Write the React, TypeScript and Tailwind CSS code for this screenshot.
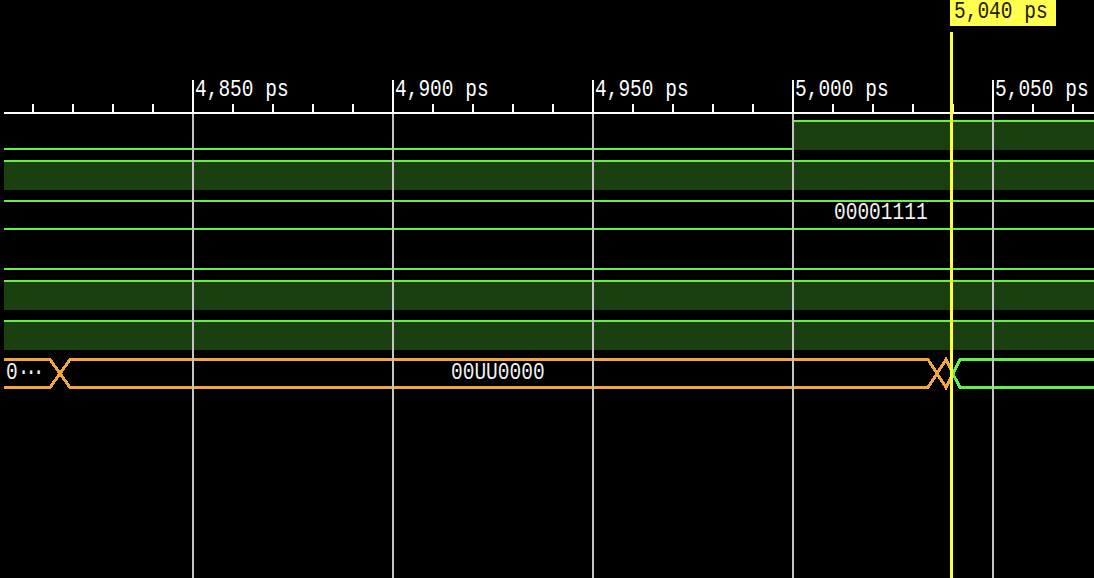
import React from 'react';

// waveform colours
const GREEN = '#66f046';
const FILL = '#1a400f';
const ORANGE = '#f2a73b';
const W = 1090; // drawable width (page is 1094, 4px left gutter)

const majors = [193, 393, 593, 793, 993];
const labels = ['4,850 ps', '4,900 ps', '4,950 ps', '5,000 ps', '5,050 ps'];

const Tall: React.FC<{ children: React.ReactNode }> = ({ children }) => (
  <span className="inline-block origin-top scale-y-[1.2] whitespace-pre">{children}</span>
);

function Ruler() {
  const minors: number[] = [];
  for (let x = 33; x < 1094; x += 40) {
    if (!majors.includes(x)) minors.push(x);
  }
  return (
    <div className="relative h-[114px]">
      <svg width={W} height={114} className="block" shapeRendering="crispEdges">
        {minors.map((x) => (
          <rect key={x} x={x - 5} y={104} width={2} height={8} fill="#fff" />
        ))}
        {majors.map((x) => (
          <rect key={x} x={x - 5} y={80} width={2} height={32} fill="#fff" />
        ))}
        <rect x={0} y={112} width={W} height={2} fill="#fff" />
      </svg>
      <div className="absolute left-[191px] top-[79px] flex text-white">
        {labels.map((l) => (
          <span key={l} className="w-[200px] shrink-0">
            <Tall>{l}</Tall>
          </span>
        ))}
      </div>
    </div>
  );
}

// one 40px signal row, drawn in row-local coordinates
const Row: React.FC<{ children: React.ReactNode; label?: React.ReactNode }> = ({ children, label }) => (
  <div className="relative h-10">
    <svg width={W} height={40} className="block" shapeRendering="crispEdges">
      {children}
    </svg>
    {label}
  </div>
);

const High = ({ from = 0, to = W }: { from?: number; to?: number }) => (
  <>
    <rect x={from} y={12} width={to - from} height={28} fill={FILL} />
    <rect x={from} y={10} width={to - from} height={2} fill={GREEN} />
  </>
);

const Low = ({ from = 0, to = W }: { from?: number; to?: number }) => (
  <rect x={from} y={38} width={to - from} height={2} fill={GREEN} />
);

const BusText: React.FC<{ x: number; children: React.ReactNode }> = ({ x, children }) => (
  <div className="absolute top-[12px] text-[#f2f2f2]" style={{ left: x }}>
    <Tall>{children}</Tall>
  </div>
);

function OrangeBus() {
  // page coords minus (4, 350)
  const t = 9.5;
  const b = 37.5;
  const m = 24;
  const o = { stroke: ORANGE, strokeWidth: 3, fill: 'none' };
  const g = { stroke: GREEN, strokeWidth: 3, fill: 'none' };
  return (
    <>
      <polyline points={`0,${t} 46,${t} 66,${b} 924,${b} 942,${t} 949,${m}`} {...o} />
      <polyline points={`0,${b} 46,${b} 66,${t} 924,${t} 942,${b} 949,${m}`} {...o} />
      <polyline points={`949,${m} 956,${t} ${W},${t}`} {...g} />
      <polyline points={`949,${m} 956,${b} ${W},${b}`} {...g} />
    </>
  );
}

export default function App() {
  return (
    <div className="relative h-[578px] w-[1094px] overflow-hidden bg-black pl-1 font-['Liberation_Mono',monospace] text-[19.5px] leading-none">
      <Ruler />
      <div className="-mt-1 flex flex-col">
        <Row>
          <Low to={789} />
          <High from={789} />
        </Row>
        <Row>
          <High />
        </Row>
        <Row label={<BusText x={830}>00001111</BusText>}>
          <rect x={0} y={10} width={W} height={2} fill={GREEN} />
          <rect x={0} y={38} width={W} height={2} fill={GREEN} />
        </Row>
        <Row>
          <Low />
        </Row>
        <Row>
          <High />
        </Row>
        <Row>
          <High />
        </Row>
        <Row
          label={
            <>
              <BusText x={2}>
                0<span className="tracking-[-4.2px]">···</span>
              </BusText>
              <BusText x={447}>00UU0000</BusText>
            </>
          }
        >
          <OrangeBus />
        </Row>
      </div>

      {/* grid lines and time cursor lie over the waves */}
      <svg width={1094} height={578} className="pointer-events-none absolute left-0 top-0" shapeRendering="crispEdges">
        {majors.map((x) => (
          <rect key={x} x={x - 1} y={114} width={2} height={464} fill="#c4c4c4" />
        ))}
        <rect x={950} y={32} width={3} height={546} fill="#ffff33" />
      </svg>
      <div className="absolute left-[950px] top-0 h-[26px] w-[106px] bg-[#ffff4d] pl-[4px] pt-[1px] text-[#1c1c00]">
        <Tall>5,040 ps</Tall>
      </div>
    </div>
  );
}
